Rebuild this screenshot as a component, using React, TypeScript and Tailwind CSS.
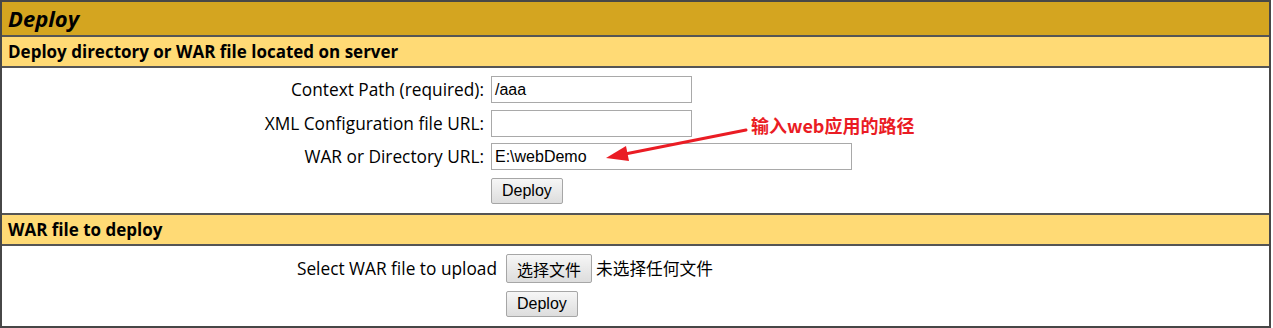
import React from "react";

const sans = { fontFamily: '"Open Sans", "Noto Sans", sans-serif' };

function Input({ value, w }: { value: string; w: string }) {
  return (
    <div
      className={`${w} h-[27px] border border-[#a9a9a9] bg-white flex items-center pl-[3px] text-[16px] text-black`}
      style={{ fontFamily: '"Liberation Sans", Arial, sans-serif' }}
    >
      {value}
    </div>
  );
}

function Btn({ children, cjk }: { children: React.ReactNode; cjk?: boolean }) {
  return (
    <div
      className="inline-flex items-center justify-center border border-[#a6a6a6] rounded-[2px] bg-gradient-to-b from-[#f6f6f6] to-[#dddddd] text-black px-[10px] text-[16px]"
      style={{
        fontFamily: cjk
          ? '"Noto Sans CJK SC", "Microsoft YaHei", sans-serif'
          : '"Liberation Sans", Arial, sans-serif',
      }}
    >
      {children}
    </div>
  );
}

export default function App() {
  return (
    <div className="w-[1273px] h-[328px] bg-white relative" style={sans}>
      <div className="w-[1271px] border-2 border-[#474747] flex flex-col">
        <div className="h-[35px] bg-[#d4a520] flex items-center px-[6px] border-b-2 border-[#555555]">
          <span className="text-[22px] font-bold italic text-black">Deploy</span>
        </div>
        <div className="h-[31px] bg-[#ffda75] flex items-center px-[6px] border-b-2 border-[#555555]">
          <span className="text-[17px] font-bold text-black">Deploy directory or WAR file located on server</span>
        </div>
        <div className="h-[147px] border-b-2 border-[#555555] pt-[8px]">
          <div className="grid grid-cols-[482px_auto] gap-x-[7px] gap-y-[7px] items-center text-[17.3px] text-black">
            <div className="text-right">Context Path (required):</div>
            <Input value="/aaa" w="w-[201px]" />
            <div className="text-right">XML Configuration file URL:</div>
            <Input value="" w="w-[201px]" />
            <div className="text-right">WAR or Directory URL:</div>
            <div className="-mt-[1px]"><Input value="E:\webDemo" w="w-[361px]" /></div>
            <div />
            <div className="mt-[1px]"><div className="h-[26px] flex"><Btn>Deploy</Btn></div></div>
          </div>
        </div>
        <div className="h-[31px] bg-[#ffda75] flex items-center px-[6px] border-b-2 border-[#555555]">
          <span className="text-[17px] font-bold text-black">WAR file to deploy</span>
        </div>
        <div className="h-[80px] pt-[8px]">
          <div className="grid grid-cols-[495px_auto] gap-x-[9px] gap-y-[8px] items-center text-[17.3px] text-black">
            <div className="text-right">Select WAR file to upload</div>
            <div className="flex items-center gap-[4px]">
              <div className="h-[29px] flex"><Btn cjk>选择文件</Btn></div>
              <span className="text-[16.7px]" style={{ fontFamily: '"Noto Sans CJK SC", sans-serif' }}>未选择任何文件</span>
            </div>
            <div />
            <div className="h-[26px] flex"><Btn>Deploy</Btn></div>
          </div>
        </div>
      </div>

      <div
        className="absolute left-[751px] top-[116px] text-[18px] font-bold text-[#ea1c24] leading-none"
        style={{ fontFamily: '"Noto Sans CJK SC", sans-serif' }}
      >
        输入web应用的路径
      </div>
      <svg className="absolute left-0 top-0" width="1273" height="328" viewBox="0 0 1273 328">
        <line x1="746" y1="130" x2="620" y2="155" stroke="#ea1c24" strokeWidth="3" strokeLinecap="round" />
        <polygon points="606,158 626,146 629,161" fill="#ea1c24" />
      </svg>
    </div>
  );
}
